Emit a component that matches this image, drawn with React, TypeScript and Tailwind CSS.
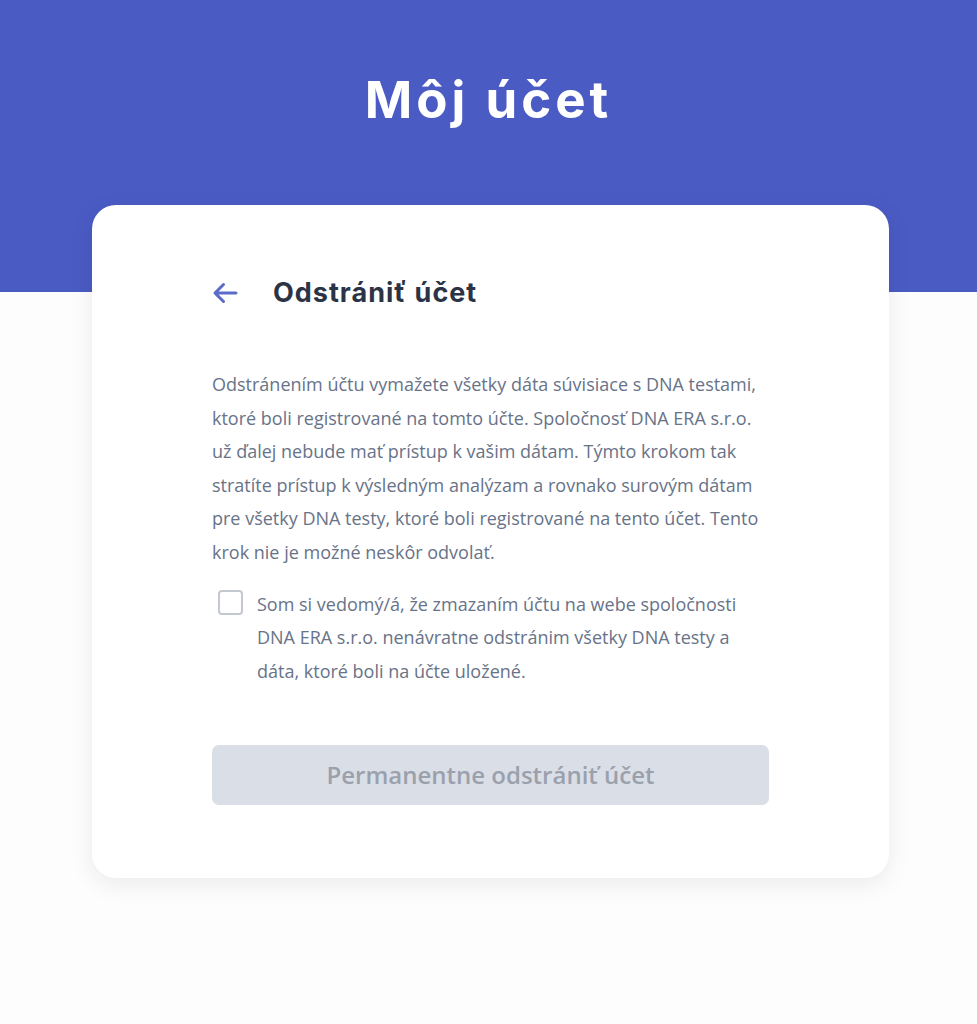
export default function App() {
    return (
        <div className="min-h-screen bg-[#fdfdfd]" style={{ fontFamily: '"Open Sans", sans-serif' }}>
            <div className="flex h-[292px] justify-center bg-[#4a5bc4] pt-[66px]">
                <h1 className="text-[51px] font-bold leading-[68px] tracking-[4px] text-white" style={{ fontFamily: 'Inter, sans-serif' }}>
                    Môj účet
                </h1>
            </div>

            <div className="flex justify-center pl-[4px]">
                <div className="-mt-[87px] w-[797px] rounded-[24px] bg-white px-[120px] pt-[70px] pb-[73px] shadow-[0_6px_24px_rgba(0,0,0,0.08)]">
                    <div className="flex items-center gap-[35px]">
                        <svg width="26" height="22" viewBox="0 0 26 22" fill="none" stroke="#5a6bc9" strokeWidth="3" strokeLinecap="round" strokeLinejoin="round">
                            <path d="M11.5 2.5 L3 11 L11.5 19.5 M3 11 H24" />
                        </svg>
                        <h2 className="text-[27px] leading-[36px] font-bold tracking-[1px] text-[#2b3446]" style={{ fontFamily: 'Inter, sans-serif' }}>
                            Odstrániť účet
                        </h2>
                    </div>

                    <p className="mt-[57px] w-[562px] text-[18px] leading-[33.6px] text-[#687388]">
                        Odstránením účtu vymažete všetky dáta súvisiace s DNA testami, ktoré boli registrované na tomto účte. Spoločnosť DNA ERA s.r.o. už ďalej nebude mať prístup k vašim dátam. Týmto krokom tak stratíte prístup k výsledným analýzam a rovnako surovým dátam pre všetky DNA testy, ktoré boli registrované na tento účet. Tento krok nie je možné neskôr odvolať.
                    </p>

                    <label className="mt-[18px] flex gap-[14px] pl-[6px]">
                        <span className="mt-[2px] h-[25px] w-[25px] shrink-0 rounded-[4px] border-2 border-[#c3c8d1] bg-white" />
                        <span className="w-[500px] text-[18px] leading-[33.6px] text-[#687388]">
                            Som si vedomý/á, že zmazaním účtu na webe spoločnosti DNA ERA s.r.o. nenávratne odstránim všetky DNA testy a dáta, ktoré boli na účte uložené.
                        </span>
                    </label>

                    <button className="mt-[57px] flex h-[60px] w-full items-center justify-center rounded-[7px] bg-[#dadee6] text-[24px] font-semibold text-[#9aa1ad]">
                        Permanentne odstrániť účet
                    </button>
                </div>
            </div>
        </div>
    );
}
